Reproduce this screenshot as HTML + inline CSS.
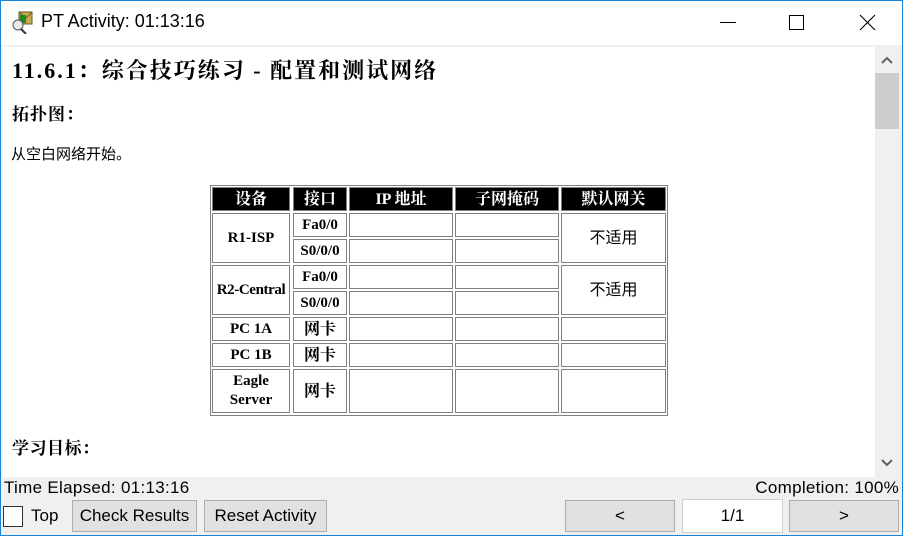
<!DOCTYPE html>
<html><head><meta charset="utf-8"><style>
*{margin:0;padding:0;box-sizing:border-box}
body{width:903px;height:536px;position:relative;overflow:hidden;background:#f0f0f0;font-family:"Liberation Sans","Noto Sans CJK SC",sans-serif}
.a{position:absolute}
.c{position:absolute;border:1px solid #808080;display:flex;align-items:center;justify-content:center;text-align:center;font-family:"Liberation Serif","Noto Serif CJK SC",serif;font-weight:bold;font-size:15px;color:#000;background:#fff;line-height:19px}
.h{background:#000;color:#fff;border-color:#808080;font-size:16px}
.n{font-family:"Liberation Sans","Noto Sans CJK SC",sans-serif;font-weight:normal;font-size:16px}
.btn{position:absolute;background:#e1e1e1;border:1px solid #adadad;font-size:17px;color:#000;display:flex;align-items:center;justify-content:center}
</style></head><body>
<div class="a" style="left:0;top:0;width:903px;height:45px;background:#fff;border:1px solid #1883d7;border-bottom:none"></div>
<svg class="a" style="left:11px;top:10px" width="24" height="24" viewBox="0 0 24 24"><rect x="8" y="2" width="13" height="12" fill="#c9a850" stroke="#6b5a20"/><path d="M8 2l7 6 6-6" fill="none" stroke="#6b5a20"/><rect x="9" y="5" width="6" height="8" fill="#1a8a1a"/><circle cx="7" cy="15" r="5" fill="#e8e8e8" stroke="#555"/><path d="M10 19l5 5" stroke="#333" stroke-width="2"/></svg>
<div class="a" style="left:41px;top:11px;font-size:18px;color:#000">PT Activity: 01:13:16</div>
<div class="a" style="left:720px;top:22px;width:16px;height:1px;background:#000"></div>
<div class="a" style="left:789px;top:15px;width:15px;height:15px;border:1px solid #000"></div>
<svg class="a" style="left:859px;top:14px" width="17" height="17"><path d="M1 1L16 16M16 1L1 16" stroke="#000" stroke-width="1.1"/></svg>
<div class="a" style="left:3px;top:47px;width:872px;height:430px;background:#fff"></div>
<div class="a" style="left:875px;top:47px;width:24px;height:430px;background:#f0f0f0"></div>
<div class="a" style="left:875px;top:73px;width:24px;height:56px;background:#cdcdcd"></div>
<svg class="a" style="left:880px;top:55px" width="14" height="10"><path d="M2 8L7 3L12 8" fill="none" stroke="#606060" stroke-width="2"/></svg>
<svg class="a" style="left:880px;top:458px" width="14" height="10"><path d="M2 2L7 7L12 2" fill="none" stroke="#606060" stroke-width="2"/></svg>
<div class="a" style="left:12px;top:54px;font-family:'Liberation Serif','Noto Serif CJK SC',serif;font-weight:bold;font-size:22px;letter-spacing:2px;color:#000;white-space:nowrap">11.6.1：综合技巧练习 - 配置和测试网络</div>
<div class="a" style="left:12px;top:100px;font-family:'Liberation Serif','Noto Serif CJK SC',serif;font-weight:bold;font-size:17px;letter-spacing:1px">拓扑图：</div>
<div class="a" style="left:11px;top:143px;font-size:15px">从空白网络开始。</div>
<div class="a" style="left:210px;top:185px;width:458px;height:231px;border:1px solid #808080;background:#fff"></div>
<div class="c h" style="left:212px;top:187px;width:78px;height:24px">设备</div>
<div class="c h" style="left:293px;top:187px;width:54px;height:24px">接口</div>
<div class="c h" style="left:349px;top:187px;width:104px;height:24px">IP 地址</div>
<div class="c h" style="left:455px;top:187px;width:104px;height:24px">子网掩码</div>
<div class="c h" style="left:561px;top:187px;width:105px;height:24px">默认网关</div>
<div class="c" style="left:212px;top:213px;width:78px;height:50px">R1-ISP</div>
<div class="c" style="left:293px;top:213px;width:54px;height:24px">Fa0/0</div>
<div class="c" style="left:293px;top:239px;width:54px;height:24px">S0/0/0</div>
<div class="c" style="left:349px;top:213px;width:104px;height:24px"></div>
<div class="c" style="left:349px;top:239px;width:104px;height:24px"></div>
<div class="c" style="left:455px;top:213px;width:104px;height:24px"></div>
<div class="c" style="left:455px;top:239px;width:104px;height:24px"></div>
<div class="c n" style="left:561px;top:213px;width:105px;height:50px">不适用</div>
<div class="c" style="left:212px;top:265px;width:78px;height:50px;letter-spacing:-0.4px">R2-Central</div>
<div class="c" style="left:293px;top:265px;width:54px;height:24px">Fa0/0</div>
<div class="c" style="left:293px;top:291px;width:54px;height:24px">S0/0/0</div>
<div class="c" style="left:349px;top:265px;width:104px;height:24px"></div>
<div class="c" style="left:349px;top:291px;width:104px;height:24px"></div>
<div class="c" style="left:455px;top:265px;width:104px;height:24px"></div>
<div class="c" style="left:455px;top:291px;width:104px;height:24px"></div>
<div class="c n" style="left:561px;top:265px;width:105px;height:50px">不适用</div>
<div class="c" style="left:212px;top:317px;width:78px;height:24px">PC 1A</div>
<div class="c" style="left:293px;top:317px;width:54px;height:24px;font-size:16px">网卡</div>
<div class="c" style="left:349px;top:317px;width:104px;height:24px"></div>
<div class="c" style="left:455px;top:317px;width:104px;height:24px"></div>
<div class="c" style="left:561px;top:317px;width:105px;height:24px"></div>
<div class="c" style="left:212px;top:343px;width:78px;height:24px">PC 1B</div>
<div class="c" style="left:293px;top:343px;width:54px;height:24px;font-size:16px">网卡</div>
<div class="c" style="left:349px;top:343px;width:104px;height:24px"></div>
<div class="c" style="left:455px;top:343px;width:104px;height:24px"></div>
<div class="c" style="left:561px;top:343px;width:105px;height:24px"></div>
<div class="c" style="left:212px;top:369px;width:78px;height:44px">Eagle<br>Server</div>
<div class="c" style="left:293px;top:369px;width:54px;height:44px;font-size:16px">网卡</div>
<div class="c" style="left:349px;top:369px;width:104px;height:44px"></div>
<div class="c" style="left:455px;top:369px;width:104px;height:44px"></div>
<div class="c" style="left:561px;top:369px;width:105px;height:44px"></div>
<div class="a" style="left:12px;top:434px;font-family:'Liberation Serif','Noto Serif CJK SC',serif;font-weight:bold;font-size:17px;letter-spacing:0.5px">学习目标：</div>
<div class="a" style="left:4px;top:478px;font-size:17px;letter-spacing:0.3px">Time Elapsed: 01:13:16</div>
<div class="a" style="right:4px;top:478px;font-size:17px;letter-spacing:0.3px">Completion: 100%</div>
<div class="a" style="left:3px;top:506px;width:20px;height:21px;border:1px solid #333;background:#fff"></div>
<div class="a" style="left:31px;top:506px;font-size:17px">Top</div>
<div class="btn" style="left:72px;top:500px;width:125px;height:32px">Check Results</div>
<div class="btn" style="left:204px;top:500px;width:123px;height:32px">Reset Activity</div>
<div class="btn" style="left:565px;top:500px;width:110px;height:32px">&lt;</div>
<div class="a" style="left:682px;top:499px;width:101px;height:34px;background:#fff;border:1px solid #d0d0d0;display:flex;align-items:center;justify-content:center;font-size:17px">1/1</div>
<div class="btn" style="left:789px;top:500px;width:110px;height:32px">&gt;</div>
<div class="a" style="left:0;top:0;width:1px;height:536px;background:#1883d7"></div>
<div class="a" style="right:0;top:0;width:1px;height:536px;background:#1883d7"></div>
<div class="a" style="left:0;bottom:0;width:903px;height:1px;background:#1883d7"></div>
</body></html>
